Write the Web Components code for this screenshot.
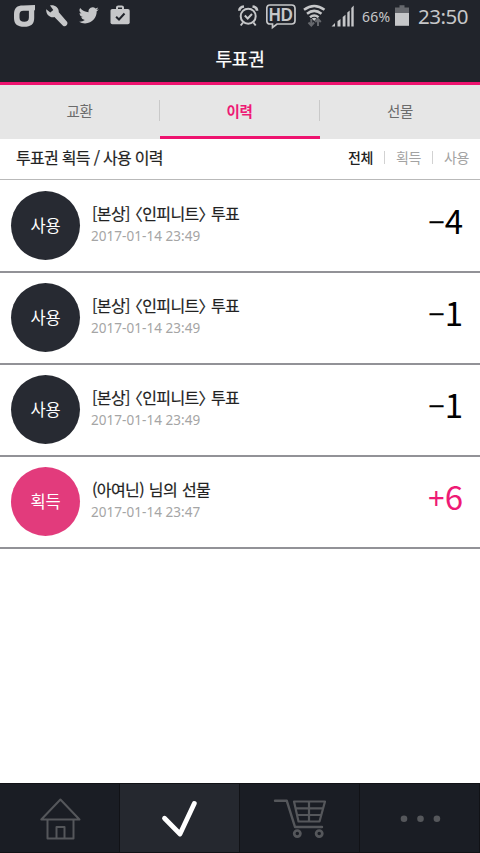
<!DOCTYPE html>
<html lang="ko">
<head>
<meta charset="utf-8">
<meta name="viewport" content="width=device-width, initial-scale=1">
<title>투표권</title>
<style>
  html, body { height: 100%; margin: 0; }
  body {
    background: #fff;
    font-family: "Noto Sans CJK KR", "Noto Sans", sans-serif;
    overflow: hidden;
  }
</style>
</head>
<body>
<vote-app></vote-app>

<script>
// ---- Barra de estado ----
class StatusBar extends HTMLElement {
  constructor() {
    super();
    this.attachShadow({ mode: "open" });
  }

  connectedCallback() {
    this.shadowRoot.innerHTML = `
      <style>
        :host {
          display: flex;
          justify-content: space-between;
          height: 32px;
          box-sizing: border-box;
          padding: 0 12px 0 14px;
          background: #21242b;
          color: #c6c7c9;
          --tenue: #66686d;
        }
        div { display: flex; align-items: flex-start; }
        svg { display: block; flex: none; height: 32px; }
        .izq { gap: 11px; }
        .bateria { font: 14px/34px "Noto Sans", sans-serif; letter-spacing: 0.2px; width: 33px; }
        .hora { font: 20.5px/33px "Noto Sans", sans-serif; letter-spacing: -0.5px; width: 50px; margin-left: 9px; white-space: nowrap; }
      </style>
      <div class="izq">
        <svg width="21" viewBox="14 0 21 32">
          <path fill="currentColor" fill-rule="evenodd" d="M35 5V9.500Q35 10.300 34.200 10.600V18C34.200 24 31 26.800 24.200 26.800S14 24 14 18V14C14 8 17 5.500 23 5.500ZM23.500 10.700C20.500 10.700 19.500 12 19.500 14.500V17.500C19.500 20.500 21 21.700 24.200 21.700S28.900 20.500 28.900 17.500V10.700Z"/>
        </svg>
        <svg width="22" viewBox="46 0 22 32" fill="currentColor">
          <path d="M50 5.500C54 4.500 59 7 58.800 12.200L67 21.800C68.600 24 65.800 27.500 63 25.700L54.400 17C50 18 45.800 14.500 46.200 9.200L50.300 12.600L53.300 10Z"/>
        </svg>
        <svg width="20" viewBox="79.500 0 20 32">
          <path fill="currentColor" transform="translate(79.300 5.400) scale(.83)" d="M23.950 4.570a10 10 0 0 1-2.820.77 4.960 4.960 0 0 0 2.160-2.720c-.95.550-2 .95-3.130 1.180a4.920 4.920 0 0 0-8.380 4.480C7.690 8.090 4.070 6.130 1.640 3.160a4.920 4.920 0 0 0 1.520 6.570 4.900 4.900 0 0 1-2.230-.61v.06a4.920 4.920 0 0 0 3.950 4.830 5 5 0 0 1-2.210.08 4.940 4.940 0 0 0 4.600 3.420A9.870 9.870 0 0 1 0 19.540a13.990 13.990 0 0 0 7.550 2.210c9.050 0 14-7.500 14-13.980 0-.21 0-.42-.02-.63a9.940 9.940 0 0 0 2.460-2.550z"/>
        </svg>
        <svg width="20" viewBox="110.500 0 20 32">
          <path d="M117.500 10V7.600Q117.500 6.500 118.700 6.500H122.300Q123.500 6.500 123.500 7.600V10" fill="none" stroke="currentColor" stroke-width="2"/>
          <rect x="111" y="9" width="19.200" height="15.200" rx="1.800" fill="currentColor"/>
          <path d="M116.600 16.700L119.500 19.500L125 13.500" fill="none" stroke="#21242b" stroke-width="2"/>
        </svg>
      </div>
      <div>
        <svg width="28" viewBox="238 0 28 32" fill="none" stroke="currentColor" stroke-width="2">
          <circle cx="248.200" cy="16.200" r="7.500"/>
          <path d="M239.300 10.800Q239.500 7 244 6.500M257.100 10.800Q257 7 252.500 6.500" stroke-width="2.600"/>
          <path d="M244.800 15.500L247.700 18.500L252 14M243 22.500L240.700 25.500M253.400 22.500L255.700 25.500"/>
        </svg>
        <svg width="37" viewBox="266 0 37 32">
          <path d="M270 5H291.500Q295 5 295 8.500V20.500Q295 24 291.500 24H277L272.500 27.500V24H270Q266.800 24 266.800 20.500V8.500Q266.800 5 270 5Z" fill="none" stroke="currentColor" stroke-width="1.700"/>
          <text x="268.700" y="21" font-family="Liberation Sans" font-weight="700" font-size="17.500" textLength="24" lengthAdjust="spacingAndGlyphs" fill="currentColor">HD</text>
        </svg>
        <svg width="28" viewBox="302.500 0 28 32" fill="none" stroke="currentColor" stroke-width="2.500">
          <path d="M303.500 9.800Q313.700 2.200 324 9.800M306.500 13.700Q313.700 8 321 13.700M309.500 17.300Q313.700 13.800 318 17.300"/>
          <path d="M311.300 18.500Q313.700 16.800 316 18.500L313.700 21Z" fill="currentColor" stroke="none"/>
          <path d="M310.800 19V25M308 22.500L310.800 25.500L313.600 22.500M317.500 26V20M314.700 22L317.500 19L320.300 22" stroke="var(--tenue)" stroke-width="2"/>
        </svg>
        <svg width="31" viewBox="330.500 0 31 32" fill="currentColor">
          <path d="M331 26.500L334.500 23V26.500ZM337 21.200L340 19V26.500H337ZM342.200 17L345 14.800V26.500H342.200ZM346.800 12.500L349.200 10.500V26.500H346.800ZM350.800 8L353.200 5.500V26.500H350.800Z"/>
        </svg>
        <span class="bateria">66%</span>
        <svg width="14" viewBox="395 0 14 32">
          <path d="M395 7.500H399.500V5.200H404.500V7.500H409V13H395Z" fill="var(--tenue)"/>
          <path d="M395 13H409V25.800H395Z" fill="currentColor"/>
        </svg>
        <span class="hora">23:50</span>
      </div>
    `;
  }
}

// ---- Título de la pantalla ----
class TitleBar extends HTMLElement {
  constructor() {
    super();
    this.attachShadow({ mode: "open" });
    this.shadowRoot.innerHTML = `
      <style>
        :host {
          display: block;
          height: 53px;
          box-sizing: border-box;
          border-bottom: 3px solid #ee136f;
          background: #21242b;
          color: #fff;
          font-size: 18px;
          line-height: 52px;
          letter-spacing: -0.2px;
          -webkit-text-stroke: 0.25px;
          text-align: center;
        }
      </style>
      <slot></slot>
    `;
  }
}

// ---- Pestañas ----
class TabItem extends HTMLElement {
  constructor() {
    super();
    this.attachShadow({ mode: "open" });
    this.shadowRoot.innerHTML = `
      <style>
        :host {
          display: flex;
          flex: 1;
          align-items: center;
          box-sizing: border-box;
          border-bottom: 3px solid transparent;
          color: #6b6b6b;
          font-size: 14.5px;
          letter-spacing: -0.4px;
        }
        :host([activo]) { color: #ee1a75; border-color: #ee136f; font-weight: 700; }
        span { flex: 1; text-align: center; }
        i { width: 1px; height: 21px; background: #c9c9c9; }
        :host(:last-child) i { display: none; }
      </style>
      <span><slot></slot></span><i></i>
    `;
  }
}

class TabBar extends HTMLElement {
  constructor() {
    super();
    this.attachShadow({ mode: "open" });
    this.shadowRoot.innerHTML = `
      <style>
        :host { display: flex; height: 54px; background: #e6e6e6; }
      </style>
      <slot></slot>
    `;
  }
}

// ---- Encabezado de la lista con filtros ----
class FilterBar extends HTMLElement {
  constructor() {
    super();
    this.attachShadow({ mode: "open" });
  }

  connectedCallback() {
    const filtros = this.getAttribute("filtros").split(",");
    this.shadowRoot.innerHTML = `
      <style>
        :host {
          display: flex;
          justify-content: space-between;
          align-items: center;
          height: 41px;
          box-sizing: border-box;
          padding: 0 11px 4px 16px;
          border-bottom: 1px solid #b9b9b9;
          color: #222;
        }
        .titulo { font-size: 16px; letter-spacing: -0.7px; white-space: nowrap; -webkit-text-stroke: 0.2px; }
        .filtros { display: flex; align-items: center; font-size: 14px; letter-spacing: -0.4px; color: #a3a3a3; }
        .filtros span:first-child { color: #222; font-weight: 500; }
        .filtros span + span { display: flex; align-items: center; }
        .filtros span + span::before { content: ""; width: 1px; height: 13px; margin: 0 11px; background: #d2d2d2; }
      </style>
      <span class="titulo"><slot></slot></span>
      <div class="filtros">${filtros.map((f) => `<span>${f}</span>`).join("")}</div>
    `;
  }
}

/**
 * <history-row>
 *   tipo     -> texto del círculo; "획득" lo pinta de rosa
 *   fecha    -> fecha y hora
 *   cantidad -> votos sumados o restados
 */
class HistoryRow extends HTMLElement {
  constructor() {
    super();
    this.attachShadow({ mode: "open" });
  }

  connectedCallback() {
    const ganado = this.getAttribute("tipo") === "획득";
    this.shadowRoot.innerHTML = `
      <style>
        :host {
          display: flex;
          height: 92px;
          box-sizing: border-box;
          padding: 0 17px 0 11px;
          border-bottom: 2px solid #929297;
          --circulo: ${ganado ? "#e23b7c" : "#272a32"};
          --numero: ${ganado ? "#ee1a75" : "#000"};
        }
        .circulo {
          flex: none;
          width: 69px;
          height: 69px;
          margin-top: 10px;
          border-radius: 50%;
          background: var(--circulo);
          color: #fff;
          font-size: 16.5px;
          line-height: 69px;
          letter-spacing: -0.3px;
          text-align: center;
        }
        .datos { flex: 1; margin: 20px 0 0 12px; white-space: nowrap; }
        .nombre { font-size: 16px; line-height: 24px; letter-spacing: -0.6px; word-spacing: 1px; color: #222; -webkit-text-stroke: 0.2px; font-feature-settings: "halt"; }
        .fecha { font: 13.5px/20px "Noto Sans", sans-serif; color: #a5a5a5; margin: 1px 0 0 -1px; letter-spacing: 0.05px; }
        .cantidad { display: flex; font-size: 33px; line-height: 40px; color: var(--numero); margin-top: 19px; }
        .signo { width: 17px; font: 30px/43px "Noto Sans", sans-serif; }
      </style>
      <div class="circulo">${this.getAttribute("tipo")}</div>
      <div class="datos">
        <div class="nombre"><slot></slot></div>
        <div class="fecha">${this.getAttribute("fecha")}</div>
      </div>
      <div class="cantidad"><span class="signo">${this.getAttribute("cantidad")[0]}</span>${this.getAttribute("cantidad").slice(1)}</div>
    `;
  }
}

// ---- Navegación inferior ----
const ICONOS = {
  casa: `<path d="M41.300 36.500L60.400 16.500L79.500 36.500ZM47.500 36.500V55.500H73.500V36.500M56.500 55.500V44H64.500V55.500" stroke-width="2"/>`,
  voto: `<path d="M44.500 35.300L60 51L74.300 20.500" stroke="#fff" stroke-width="4.800"/>`,
  carrito: `<path d="M35 17.800H46.800L55 44H82" stroke-width="2.400"/>
    <path d="M54 18.500H85L79.500 38.500H58.500ZM55.500 25.300H83M57.200 32H81M69 18.500V38.500" stroke-width="2.200"/>
    <circle cx="57.300" cy="50.600" r="3.100" stroke-width="2.700"/><circle cx="79.200" cy="50.600" r="3.100" stroke-width="2.700"/>`,
  mas: `<g fill="currentColor" stroke="none"><circle cx="44" cy="35.700" r="3.300"/><circle cx="60.500" cy="35.700" r="3.300"/><circle cx="76.900" cy="35.700" r="3.300"/></g>`,
};

class BottomNav extends HTMLElement {
  constructor() {
    super();
    this.attachShadow({ mode: "open" });
  }

  connectedCallback() {
    const activo = this.getAttribute("activo");
    this.shadowRoot.innerHTML = `
      <style>
        :host { display: flex; height: 70px; color: #55575b; }
        div { flex: 1; min-width: 0; box-sizing: border-box; background: #1a1d24; border: solid #111216; border-width: 1px 1px 1px 0; }
        .activo { background: #25282f; }
        svg { display: block; margin-top: -1px; }
      </style>
      ${Object.keys(ICONOS)
        .map(
          (n) => `<div class="${n === activo ? "activo" : ""}">
            <svg width="120" height="69" viewBox="0 0 120 69" fill="none" stroke="currentColor" stroke-linecap="round" stroke-linejoin="round">${ICONOS[n]}</svg>
          </div>`
        )
        .join("")}
    `;
  }
}

// ---- Pantalla completa ----
class VoteApp extends HTMLElement {
  constructor() {
    super();
    this.attachShadow({ mode: "open" });
    this.shadowRoot.innerHTML = `
      <style>
        :host { display: flex; flex-direction: column; height: 100vh; overflow: hidden; }
        main { flex: 1; padding-top: 1px; }
      </style>
      <status-bar></status-bar>
      <title-bar>투표권</title-bar>
      <tab-bar>
        <tab-item>교환</tab-item>
        <tab-item activo>이력</tab-item>
        <tab-item>선물</tab-item>
      </tab-bar>
      <filter-bar filtros="전체,획득,사용">투표권 획득 / 사용 이력</filter-bar>
      <main>
        <history-row tipo="사용" fecha="2017-01-14 23:49" cantidad="−4">[본상] 〈인피니트〉 투표</history-row>
        <history-row tipo="사용" fecha="2017-01-14 23:49" cantidad="−1">[본상] 〈인피니트〉 투표</history-row>
        <history-row tipo="사용" fecha="2017-01-14 23:49" cantidad="−1">[본상] 〈인피니트〉 투표</history-row>
        <history-row tipo="획득" fecha="2017-01-14 23:47" cantidad="+6">(아여닌) 님의 선물</history-row>
      </main>
      <bottom-nav activo="voto"></bottom-nav>
    `;
  }
}

customElements.define("status-bar", StatusBar);
customElements.define("title-bar", TitleBar);
customElements.define("tab-item", TabItem);
customElements.define("tab-bar", TabBar);
customElements.define("filter-bar", FilterBar);
customElements.define("history-row", HistoryRow);
customElements.define("bottom-nav", BottomNav);
customElements.define("vote-app", VoteApp);
</script>
</body>
</html>
